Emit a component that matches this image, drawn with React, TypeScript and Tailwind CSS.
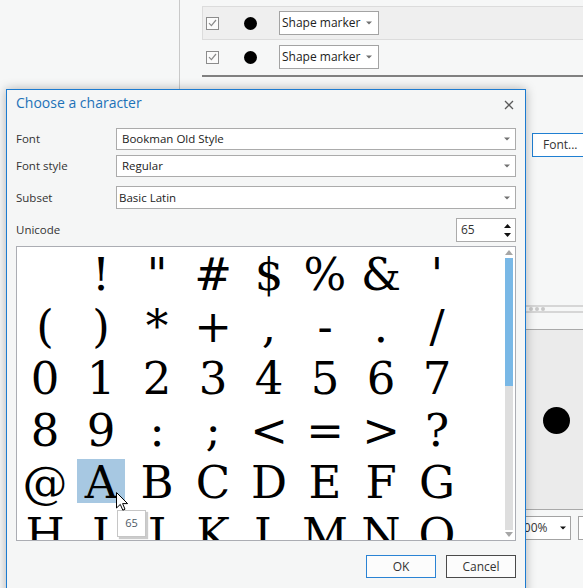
const chars = Array.from({ length: 48 }, (_, i) => String.fromCharCode(32 + i));

function Caret({ color = "#707070" }: { color?: string }) {
  return (
    <svg width="6" height="4" viewBox="0 0 6 4" className="shrink-0">
      <path d="M0 0.5 H6 L3 3.5 Z" fill={color} />
    </svg>
  );
}

function CheckBox() {
  return (
    <div className="flex h-[13px] w-[13px] items-center justify-center border border-[#8c8c8c] bg-[#fbfbfb]">
      <svg width="9" height="8" viewBox="0 0 9 8">
        <path d="M1 4.2 L3.4 6.6 L8 1" fill="none" stroke="#8a8a8a" strokeWidth="1.2" />
      </svg>
    </div>
  );
}

function MarkerRow({ boxed }: { boxed?: boolean }) {
  return (
    <div
      className={
        boxed
          ? "flex h-[34px] items-center border border-[#dcdcdc] bg-[#efefef] pl-[3px]"
          : "flex h-[34px] items-center border border-transparent pl-[3px]"
      }
    >
      <CheckBox />
      <div className="ml-[25px] h-[13px] w-[13px] rounded-full bg-black" />
      <div className="ml-[22px] flex h-[24px] w-[100px] items-center justify-between border border-[#a3a3a3] bg-white pl-[2px] pr-[6px] text-[12px] text-[#222]">
        Shape marker
        <Caret />
      </div>
    </div>
  );
}

function Select({ value, pad = "pl-[5px]" }: { value: string; pad?: string }) {
  return (
    <div className={`flex h-full flex-1 items-center justify-between border border-[#ababab] bg-white pr-[5px] text-[#222] ${pad}`}>
      <span>{value}</span>
      <Caret />
    </div>
  );
}

export default function App() {
  return (
    <div className="relative h-[588px] w-[583px] overflow-hidden bg-[#f6f7f7] font-['Open_Sans','Noto_Sans',sans-serif] text-[11.5px]">
      {/* background window */}
      <div className="flex h-full">
        <div className="w-[180px] shrink-0 border-r border-[#c9c9c9]" />
        <div className="min-w-0 flex-1 pl-[22px] pt-[6px]">
          <div className="-mr-[10px]">
            <MarkerRow boxed />
            <MarkerRow />
          </div>
          <div className="-mr-[10px] mt-[1px] h-[2px] bg-[#808080]" />
          <div className="ml-[330px] mt-[56px] flex h-[24px] w-[80px] items-center border border-[#1f7fd2] bg-white pl-[10px] text-[12px] text-[#333]">
            Font...
          </div>
          <div className="-mr-[10px] mt-[148px] flex h-[8px] items-center border-y-2 border-[#d6d6d6] pl-[327px]">
            <div className="flex gap-[2px]">
              <div className="h-[4px] w-[4px] rounded-full bg-[#c8c8c8]" />
              <div className="h-[4px] w-[4px] rounded-full bg-[#c8c8c8]" />
              <div className="h-[4px] w-[4px] rounded-full bg-[#c8c8c8]" />
            </div>
          </div>
          <div className="-mr-[10px] mt-[16px] h-[181px] border-y border-[#a9a9a9] bg-[#ebebeb] pl-[341px] pt-[77px]">
            <div className="h-[27px] w-[27px] rounded-full bg-black" />
          </div>
          <div className="mt-[6px] flex h-[24px] items-center pl-[280px]">
            <div className="flex h-full w-[89px] shrink-0 items-center justify-between border border-[#a3a3a3] bg-white pl-[34px] pr-[4px] text-[12px] text-[#333]">
              100%
              <Caret color="#111" />
            </div>
            <div className="ml-[7px] h-full w-[20px] shrink-0 border border-[#a3a3a3] bg-white" />
          </div>
        </div>
      </div>

      {/* dialog */}
      <div className="absolute left-[6px] top-[89px] h-[520px] w-[520px] border border-[#1c7bd0] bg-[#f5f6f6] shadow-[0_0_10px_rgba(0,0,0,0.28)]">
        <div className="flex h-[38px] items-start justify-between pl-[9px] pr-[11px]">
          <div className="pt-[2px] text-[14px] text-[#1d72b8]">Choose a character</div>
          <svg width="10" height="10" viewBox="0 0 10 10" className="mt-[10px]">
            <path d="M1 1 L9 9 M9 1 L1 9" stroke="#5a5a5a" strokeWidth="1.3" />
          </svg>
        </div>
        <div className="px-[9px] text-[#333]">
          <div className="flex h-[22px] items-center">
            <div className="w-[100px]">Font</div>
            <Select value="Bookman Old Style" />
          </div>
          <div className="mt-[5px] flex h-[22px] items-center">
            <div className="w-[100px]">Font style</div>
            <Select value="Regular" />
          </div>
          <div className="mt-[9px] flex h-[23px] items-center">
            <div className="w-[100px]">Subset</div>
            <Select value="Basic Latin" pad="pl-[2px]" />
          </div>
          <div className="mt-[9px] flex h-[24px] items-center justify-between">
            <div>Unicode</div>
            <div className="flex h-full w-[60px] items-center justify-between border border-[#ababab] bg-white pl-[4px] pr-[4px] text-[12px] text-[#333]">
              65
              <div className="flex flex-col gap-[5px]">
                <svg width="7" height="4" viewBox="0 0 7 4">
                  <path d="M0 4 H7 L3.5 0 Z" fill="#111" />
                </svg>
                <svg width="7" height="4" viewBox="0 0 7 4">
                  <path d="M0 0 H7 L3.5 4 Z" fill="#111" />
                </svg>
              </div>
            </div>
          </div>

          <div className="mt-[4px] flex h-[295px] justify-between overflow-hidden border border-[#abadb3] bg-white">
            <div className="grid grid-cols-[repeat(8,48px)] auto-rows-[44px] gap-x-[8px] gap-y-[8px] pl-[4px] pt-[4px] font-['DejaVu_Serif',serif] text-[45px] leading-[47px] text-black">
              {chars.map((c, i) => (
                <div
                  key={i}
                  className={i === 33 ? "h-[44px] w-[48px] bg-[#a7c8e2] text-center" : "h-[44px] w-[48px] text-center"}
                >
                  {c === " " ? "\u00a0" : c}
                </div>
              ))}
            </div>
            <div className="mr-[2px] mt-[2px] flex w-[8px] flex-col items-center">
              <svg width="8" height="6" viewBox="0 0 8 6">
                <path d="M0 6 H8 L4 1 Z" fill="#a6a6a6" />
              </svg>
              <div className="mt-[3px] h-[272px] w-[8px] bg-[#dedede]">
                <div className="h-[128px] w-full bg-[#79b8e6]" />
              </div>
              <svg width="8" height="6" viewBox="0 0 8 6" className="mt-[2px]">
                <path d="M0 0 H8 L4 5 Z" fill="#a6a6a6" />
              </svg>
            </div>
          </div>

          <div className="mt-[14px] flex h-[23px] justify-end gap-[10px] text-[12px] text-[#333]">
            <div className="flex w-[70px] items-center justify-center border border-[#2a83d4] bg-[#fcfcfc]">OK</div>
            <div className="flex w-[70px] items-center justify-center border border-[#4a4a4a] bg-[#fcfcfc]">Cancel</div>
          </div>
        </div>
      </div>

      {/* tooltip + cursor */}
      <div className="absolute left-[117px] top-[510px] flex h-[27px] w-[29px] items-center justify-center border border-[#c6c6c6] bg-white text-[11px] text-[#4d5a66] shadow-[2px_2px_1px_rgba(0,0,0,0.2)]">
        65
      </div>
      <svg width="13" height="20" viewBox="0 0 13 20" className="absolute left-[116px] top-[492px]">
        <path
          d="M0.5 0.5 L0.5 16 L4.3 12.4 L6.8 18.2 L9 17.2 L6.6 11.6 L11.6 11.6 Z"
          fill="#fff"
          stroke="#000"
          strokeWidth="1"
          strokeLinejoin="miter"
        />
      </svg>
    </div>
  );
}
